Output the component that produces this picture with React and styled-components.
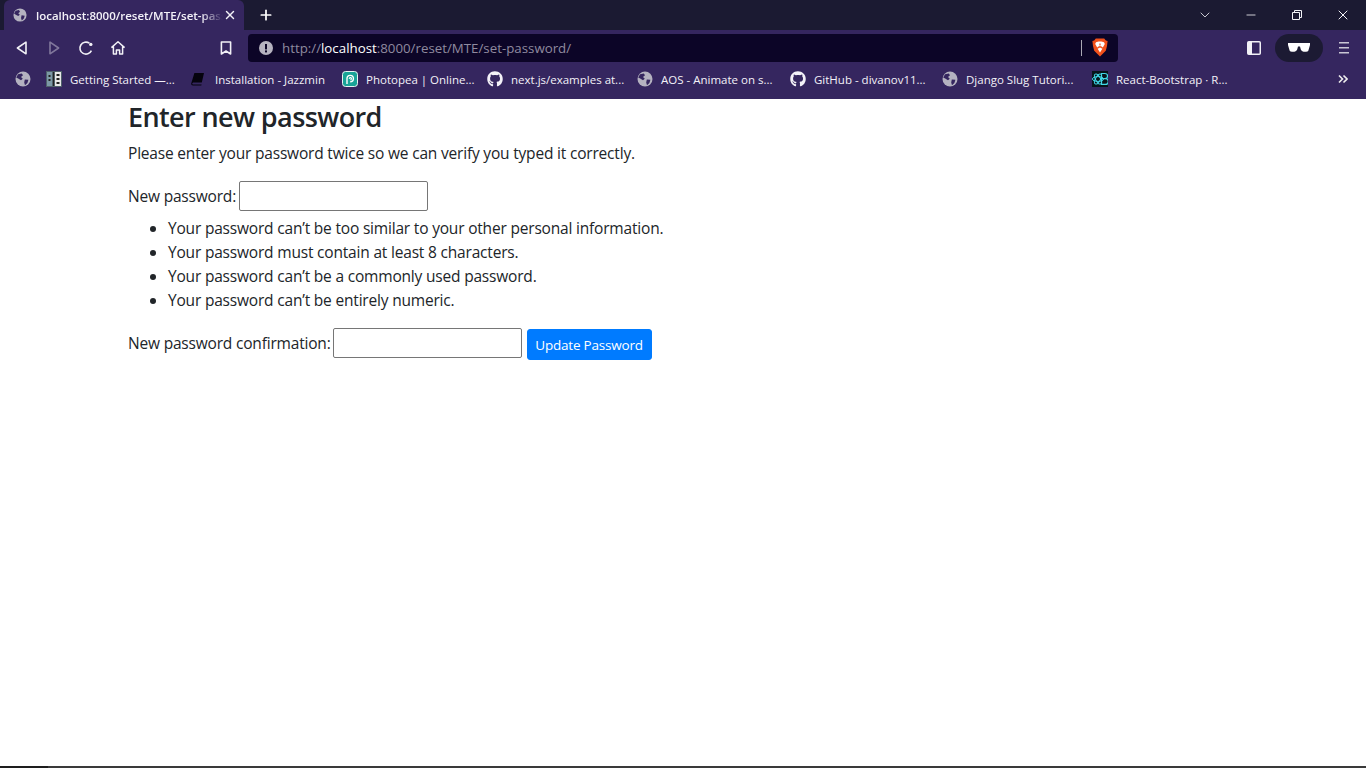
import React from 'react';
import styled, {createGlobalStyle} from 'styled-components';
import {FaGithub} from 'react-icons/fa';
import {LuChevronDown, LuMinus, LuX, LuPlus} from 'react-icons/lu';

const GlobalStyle = createGlobalStyle`
    html, body { margin: 0; padding: 0; height: 100%; background: #fff; }
    body { font-family: "Open Sans", "Noto Sans", sans-serif; color: #212529; overflow: hidden; }
    #root { height: 100%; }
    * { box-sizing: border-box; }
`;

const Window = styled.div`
    height: 768px;
    display: flex;
    flex-direction: column;
`;

const TabStrip = styled.div`
    height: 30px;
    background: #1b1a32;
    display: flex;
    align-items: flex-end;
    padding-left: 4px;
    flex-shrink: 0;
`;

const Tab = styled.div`
    width: 240px;
    height: 30px;
    background: #35265f;
    border-radius: 6px 6px 0 0;
    display: flex;
    align-items: center;
    padding: 0 7px 0 9px;
    color: #f3f1f8;
    font-family: "Open Sans", sans-serif;
    font-size: 11.5px;
    font-weight: 600;
`;

const TabTitle = styled.span`
    flex: 1;
    margin-left: 9px;
    white-space: nowrap;
    overflow: hidden;
    -webkit-mask-image: linear-gradient(to right, #000 88%, transparent 100%);
    mask-image: linear-gradient(to right, #000 88%, transparent 100%);
`;

const NewTab = styled.div`
    width: 20px;
    height: 30px;
    margin-left: 12px;
    display: flex;
    align-items: center;
    justify-content: center;
    color: #fff;
`;

const WindowControls = styled.div`
    margin-left: auto;
    height: 30px;
    display: flex;
    align-items: center;
    color: #f4f4f8;
`;

const WindowButton = styled.div`
    width: ${props => props.w || 46}px;
    display: flex;
    justify-content: center;
`;

const NavBar = styled.div`
    height: 36px;
    background: #35265f;
    display: flex;
    align-items: center;
    flex-shrink: 0;
    padding-bottom: 1px;
`;

const NavIcon = styled.div`
    width: 32px;
    height: 28px;
    display: flex;
    align-items: center;
    justify-content: center;
    color: #f1f0f6;
    opacity: ${props => props.off ? 0.4 : 1};
`;

const NavGroup = styled.div`
    display: flex;
    align-items: center;
    padding-left: 6px;
`;

const Bookmark = styled(NavIcon)`
    margin-left: 76px;
`;

const AddressBar = styled.div`
    width: 870px;
    height: 28px;
    margin-left: 6px;
    border-radius: 4px;
    background: #0c0527;
    display: flex;
    align-items: center;
    padding: 0 10px 0 11px;
    font-size: 13.3px;
    color: #8f8a9f;
`;

const Url = styled.span`
    margin-left: 9px;
    flex: 1;
    b { font-weight: 400; color: #fff; }
`;

const AddressDivider = styled.span`
    width: 1px;
    height: 16px;
    background: #aaa8b4;
    margin-right: 10px;
`;

const NavRight = styled.div`
    margin-left: auto;
    padding-right: 6px;
    display: flex;
    align-items: center;
`;

const Pill = styled.div`
    width: 48px;
    height: 28px;
    border-radius: 14px;
    background: #1c1a33;
    display: flex;
    align-items: center;
    justify-content: center;
    margin: 0 5px;
`;

const BookmarksBar = styled.div`
    height: 33px;
    background: #35265f;
    display: flex;
    align-items: center;
    padding: 0 0 7px 15px;
    flex-shrink: 0;
    color: #f3f1f8;
    font-size: 11.5px;
`;

const Item = styled.div`
    display: flex;
    align-items: center;
    white-space: nowrap;
    width: ${props => props.w}px;
    flex-shrink: 0;
    svg { flex-shrink: 0; }
`;

const ItemLabel = styled.span`
    margin-left: ${props => props.gap || 8}px;
`;

const More = styled.div`
    margin-left: auto;
    margin-right: 18px;
    display: flex;
    color: #eee;
`;

const Page = styled.main`
    flex: 1;
    padding: 0 128px;
    font-size: 15.5px;
    line-height: 24px;
    letter-spacing: -.19px;
`;

const Heading = styled.h2`
    margin: 0 0 6px;
    font-size: 27px;
    font-weight: 600;
    line-height: 36px;
    letter-spacing: -.6px;
`;

const Intro = styled.p`
    margin: 0 0 16px;
`;

const Row = styled.div`
    display: flex;
    align-items: center;
    height: 30px;
`;

const Field = styled.input`
    width: 189px;
    height: 30px;
    margin-left: ${props => props.$gap}px;
    padding: 1px 2px;
    background: #fff;
    border: 1px solid #767676;
    border-radius: 2px;
    outline: 0;
`;

const Rules = styled.ul`
    margin: 5px 0 16px;
    padding-left: 40px;
`;

const Submit = styled.button`
    width: 125px;
    height: 31px;
    margin: 3px 0 0 5px;
    padding: 0;
    border: 1px solid #007bff;
    border-radius: 3px;
    background: #007bff;
    color: #fff;
    font-family: inherit;
    font-size: 13.5px;
    letter-spacing: -.2px;
`;

const BottomEdge = styled.div`
    height: 2px;
    background: #3a3a3a;
    border-left: 48px solid #1e1e1e;
    flex-shrink: 0;
`;

const Globe = ({size = 16}) => (
    <svg width={size} height={size} viewBox="0 0 16 16">
        <circle cx="8" cy="8" r="7.5" fill="#b4b2c0"/>
        <path d="M3 3.2 6.8 2.4 8 4.2 6 6 7.8 7.8 6 9.2 3.2 7.6 1.2 6.4ZM9.8 8.4 13.4 8.8 12.4 12 10 14.2 9.2 11.4Z" fill="#35265f"/>
    </svg>
);

const Ledger = () => (
    <svg width="16" height="16" viewBox="0 0 16 16">
        <rect width="16" height="16" fill="#50616b"/>
        <rect x="1" y="1" width="5" height="14" fill="#7c98a6"/>
        <rect x="7" y="1" width="1" height="14" fill="#222"/>
        <rect x="9" y="1" width="6" height="14" fill="#e8e8e8"/>
        <path d="M2.5 4h2v2h-2zM2.5 8h2v2h-2zM10.5 3h3v2h-3zM10.5 7h3v2h-3zM10.5 11h3v2h-3z" fill="#222"/>
    </svg>
);

const Book = () => (
    <svg width="14" height="14" viewBox="0 0 14 14">
        <path d="M3.4 1H13L10.8 10.4H2.6C1.8 10.4 1.2 11 1.2 11.6 1.2 12.2 1.7 12.6 2.4 12.6H10.6L10.3 13.6H2C.9 13.6 0 12.8 .2 11.6Z" fill="#05030d"/>
    </svg>
);

const Photopea = () => (
    <svg width="16" height="16" viewBox="0 0 16 16">
        <rect x=".5" y=".5" width="15" height="15" rx="3" fill="#18a497" stroke="#e6f4f2"/>
        <path d="M5 13V7.6A3.2 3.2 0 1 1 8.2 10.8" fill="none" stroke="#fff" strokeWidth="1.4"/>
        <path d="M7.4 7.8A1 1 0 1 1 8.4 8.6" fill="none" stroke="#fff" strokeWidth="1.2"/>
    </svg>
);

const ReactBootstrap = () => (
    <svg width="16" height="16" viewBox="0 0 16 16">
        <rect width="16" height="16" fill="#07151b"/>
        <g fill="none" stroke="#41d6e6" strokeWidth="1">
            <ellipse cx="6" cy="8" rx="5.6" ry="2.4"/>
            <ellipse cx="6" cy="8" rx="5.6" ry="2.4" transform="rotate(60 6 8)"/>
            <ellipse cx="6" cy="8" rx="5.6" ry="2.4" transform="rotate(120 6 8)"/>
            <path d="M9.5 2.5H13A2.4 2.4 0 0 1 13 7.6H9.5ZM9.5 7.6H13.4A2.7 2.7 0 0 1 13.4 13.4H9.5Z" strokeWidth="1.2"/>
        </g>
    </svg>
);

const Brave = () => (
    <svg width="16" height="19" viewBox="0 0 16 19">
        <path d="M3.8 .6H12.2L13.8 2.6 15.6 3 15 8 13.8 12.8 8 18.4 2.2 12.8 1 8 .4 3 2.2 2.6Z" fill="#f1511b"/>
        <path d="M4 4.2 6.6 3.4H9.4L12 4.2 12.8 6 10.8 9.6 9.6 8.4 8 8 6.4 8.4 5.2 9.6 3.2 6ZM5.6 10.8 8 9.4 10.4 10.8 8 14.4Z" fill="#fff"/>
        <path d="M7.4 5.4H8.6V7.4H7.4Z" fill="#f1511b"/>
    </svg>
);

const BackIcon = () => (
    <svg width="14" height="16" viewBox="0 0 14 16" fill="none" stroke="currentColor" strokeWidth="1.6" strokeLinejoin="round">
        <path d="M11 2.2V13.8L2.4 8Z"/>
    </svg>
);

const ForwardIcon = () => (
    <svg width="14" height="16" viewBox="0 0 14 16" fill="none" stroke="currentColor" strokeWidth="1.6" strokeLinejoin="round">
        <path d="M3 2.2V13.8L11.6 8Z"/>
    </svg>
);

const ReloadIcon = () => (
    <svg width="16" height="16" viewBox="0 0 16 16" fill="none" stroke="currentColor" strokeWidth="1.6">
        <path d="M13.4 10.6A6 6 0 1 1 11.4 3.2"/>
        <circle cx="12.8" cy="4.4" r="1.7" fill="currentColor" stroke="none"/>
    </svg>
);

const HomeIcon = () => (
    <svg width="16" height="16" viewBox="0 0 16 16" fill="none" stroke="currentColor" strokeWidth="1.5" strokeLinejoin="round">
        <path d="M1.4 7.6 8 1.8 14.6 7.6M3.4 6.4V14H6.4V10H9.6V14H12.6V6.4"/>
    </svg>
);

const BookmarkIcon = () => (
    <svg width="12" height="14" viewBox="0 0 12 14" fill="none" stroke="currentColor" strokeWidth="1.6" strokeLinejoin="round">
        <path d="M1.4 1H10.6V13L6 10 1.4 13Z"/>
    </svg>
);

const AlertIcon = () => (
    <svg width="14" height="14" viewBox="0 0 14 14">
        <circle cx="7" cy="7" r="7" fill="#b6b3c0"/>
        <rect x="6" y="3" width="2" height="5.4" fill="#0c0527"/>
        <rect x="6" y="9.4" width="2" height="2" fill="#0c0527"/>
    </svg>
);

const RestoreIcon = () => (
    <svg width="10" height="10" viewBox="0 0 10 10" fill="none" stroke="currentColor">
        <path d="M.5 2.5H7.5V9.5H.5ZM2.5 2.5V.5H9.5V7.5H7.5"/>
    </svg>
);

const SidebarIcon = () => (
    <svg width="14" height="14" viewBox="0 0 14 14">
        <rect x=".75" y=".75" width="12.5" height="12.5" rx="1" fill="none" stroke="#f1f0f6" strokeWidth="1.5"/>
        <rect x="1" y="1" width="4" height="12" fill="#f1f0f6"/>
    </svg>
);

const Glasses = () => (
    <svg width="22" height="9" viewBox="0 0 22 9" fill="#fff">
        <path d="M0 0H22V2L20.4 7.4C20 8.4 18.6 8.8 17 8.8 15 8.8 13.4 8 12.8 6.4L12 3.6H10L9.2 6.4C8.6 8 7 8.8 5 8.8 3.4 8.8 2 8.4 1.6 7.4L0 2Z"/>
    </svg>
);

const MenuIcon = () => (
    <svg width="10" height="12" viewBox="0 0 10 12" fill="#c9c6d4">
        <path d="M0 0H10V1.6H0ZM0 5H10V6.6H0ZM0 10H10V11.6H0Z"/>
    </svg>
);

const ChevronsRight = () => (
    <svg width="10" height="10" viewBox="0 0 10 10" fill="none" stroke="currentColor" strokeWidth="1.6">
        <path d="M1 1.5 4.5 5 1 8.5M5.5 1.5 9 5 5.5 8.5"/>
    </svg>
);

const links = [
    {w: 145, icon: <Ledger/>, title: 'Getting Started —...'},
    {w: 151, icon: <Book/>, title: 'Installation - Jazzmin', gap: 10},
    {w: 145, icon: <Photopea/>, title: 'Photopea | Online...'},
    {w: 150, icon: <FaGithub size={16}/>, title: 'next.js/examples at...'},
    {w: 153, icon: <Globe/>, title: 'AOS - Animate on s...'},
    {w: 152, icon: <FaGithub size={16}/>, title: 'GitHub - divanov11...'},
    {w: 150, icon: <Globe/>, title: 'Django Slug Tutori...'},
    {w: 140, icon: <ReactBootstrap/>, title: 'React-Bootstrap · R...'},
];

const rules = [
    'Your password can’t be too similar to your other personal information.',
    'Your password must contain at least 8 characters.',
    'Your password can’t be a commonly used password.',
    'Your password can’t be entirely numeric.',
];

const App = () => (
    <Window>
        <GlobalStyle/>
        <TabStrip>
            <Tab>
                <Globe size={14}/>
                <TabTitle>localhost:8000/reset/MTE/set-password/</TabTitle>
                <LuX size={14} strokeWidth={2.4}/>
            </Tab>
            <NewTab><LuPlus size={16} strokeWidth={2.6}/></NewTab>
            <WindowControls>
                <WindowButton w={46}><LuChevronDown size={16} strokeWidth={1.2}/></WindowButton>
                <WindowButton><LuMinus size={14} strokeWidth={1.4}/></WindowButton>
                <WindowButton><RestoreIcon/></WindowButton>
                <WindowButton><LuX size={16} strokeWidth={1.5}/></WindowButton>
            </WindowControls>
        </TabStrip>
        <NavBar>
            <NavGroup>
                <NavIcon><BackIcon/></NavIcon>
                <NavIcon off><ForwardIcon/></NavIcon>
                <NavIcon><ReloadIcon/></NavIcon>
                <NavIcon><HomeIcon/></NavIcon>
            </NavGroup>
            <Bookmark><BookmarkIcon/></Bookmark>
            <AddressBar>
                <AlertIcon/>
                <Url>http://<b>localhost</b>:8000/reset/MTE/set-password/</Url>
                <AddressDivider/>
                <Brave/>
            </AddressBar>
            <NavRight>
                <NavIcon><SidebarIcon/></NavIcon>
                <Pill><Glasses/></Pill>
                <NavIcon><MenuIcon/></NavIcon>
            </NavRight>
        </NavBar>
        <BookmarksBar>
            <Item w={31}><Globe/></Item>
            {links.map(link => (
                <Item key={link.title} w={link.w}>
                    {link.icon}
                    <ItemLabel gap={link.gap}>{link.title}</ItemLabel>
                </Item>
            ))}
            <More><ChevronsRight/></More>
        </BookmarksBar>
        <Page>
            <Heading>Enter new password</Heading>
            <Intro>Please enter your password twice so we can verify you typed it correctly.</Intro>
            <Row>New password: <Field type="password" $gap={3}/></Row>
            <Rules>
                {rules.map(rule => <li key={rule}>{rule}</li>)}
            </Rules>
            <Row>
                New password confirmation: <Field type="password" $gap={2}/>
                <Submit>Update Password</Submit>
            </Row>
        </Page>
        <BottomEdge/>
    </Window>
);

export default App;
